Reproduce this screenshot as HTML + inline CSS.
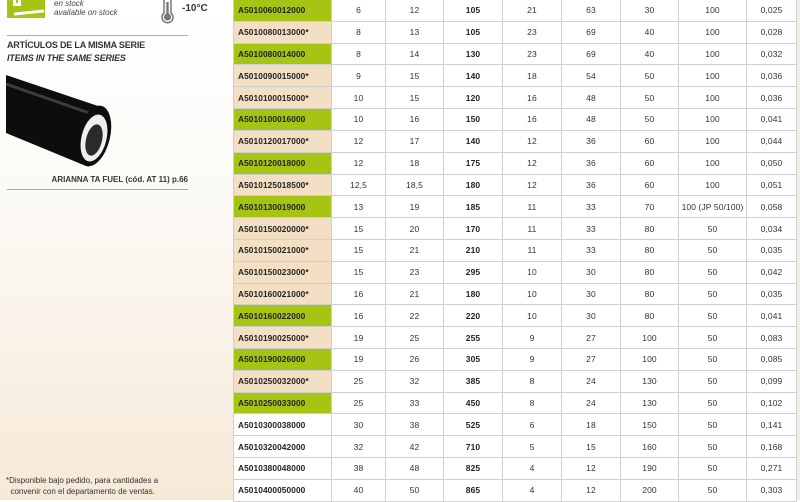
<!DOCTYPE html>
<html><head><meta charset="utf-8"><style>
*{margin:0;padding:0;box-sizing:border-box}
body{width:800px;height:500px;overflow:hidden;font-family:"Liberation Sans",sans-serif;background:#fff;position:relative}
#left{position:absolute;left:0;top:0;width:234px;height:500px;background:linear-gradient(#fff 0%,#fcfaf6 40%,#f6e9d8 100%)}
#right{position:absolute;left:796px;top:0;width:4px;height:500px;background:#f6ecdf}
table{position:absolute;left:233px;top:-1px;border-collapse:collapse;font-size:8.5px;color:#333}
td{height:21.82px;border:1px solid #cfcfcf;text-align:center;padding:0;background:#fff;letter-spacing:0.1px}
td.c{text-align:left;padding-left:4px;font-weight:bold;color:#222;font-size:8.3px}
td.g{background:#a6c414}
td.b{background:#f3dfc4}
td.w{font-weight:bold;color:#222}
</style></head><body>
<div id="left">
<div style="position:absolute;left:7px;top:0;width:38px;height:18px;background:#a6c414"></div>
<div style="position:absolute;left:13px;top:0;width:8px;height:6px;border:3px solid #fff;border-top:none"></div>
<div style="position:absolute;left:14px;top:11px;width:30px;height:3px;background:#fff;transform:rotate(-6deg)"></div>
<div style="position:absolute;left:54px;top:-1px;font-size:8px;font-style:italic;color:#444;line-height:9px">en stock<br>available on stock</div>
<svg style="position:absolute;left:158px;top:0" width="20" height="24" viewBox="0 0 20 24"><path d="M6 0 V13 A5.5 5.5 0 1 0 13 13 V0" fill="#fff" stroke="#777" stroke-width="1.5"/><circle cx="9.5" cy="17" r="3.6" fill="#777"/><rect x="8.3" y="2" width="2.4" height="14" fill="#777"/></svg>
<div style="position:absolute;left:182px;top:3px;font-size:10px;font-weight:bold;color:#333">-10°C</div>
<div style="position:absolute;left:7px;top:35px;width:181px;height:1px;background:#aaa"></div>
<div style="position:absolute;left:7px;top:39px;font-size:9px;font-weight:bold;color:#333;line-height:12.5px;letter-spacing:-0.2px">ARTÍCULOS DE LA MISMA SERIE<br><i>ITEMS IN THE SAME SERIES</i></div>
<svg style="position:absolute;left:0;top:70px" width="120" height="100" viewBox="0 0 120 100">
<path d="M6 5 L98 36 L86 96 L6 63 Z" fill="#0d0d0d"/>
<path d="M6 14 L92 44" stroke="#777" stroke-width="3" opacity=".45"/>
<ellipse cx="94" cy="66" rx="16" ry="31" transform="rotate(14 94 66)" fill="#0d0d0d"/>
<ellipse cx="94" cy="68" rx="12.5" ry="24" transform="rotate(14 94 68)" fill="#eee"/>
<ellipse cx="94" cy="70" rx="8" ry="16" transform="rotate(14 94 70)" fill="#2a2a2a"/>
</svg>
<div style="position:absolute;right:46px;top:175px;font-size:8px;font-weight:bold;color:#333">ARIANNA TA FUEL (cód. AT 11) p.66</div>
<div style="position:absolute;left:7px;top:189px;width:181px;height:1px;background:#aaa"></div>
<div style="position:absolute;left:6px;top:475px;font-size:8px;color:#333;line-height:11px">*Disponible bajo pedido, para cantidades a<br>&nbsp; convenir con el departamento de ventas.</div>
</div>
<div id="right"></div>
<table>
<colgroup><col style="width:98px"><col style="width:54px"><col style="width:58px"><col style="width:59px"><col style="width:59px"><col style="width:59px"><col style="width:58px"><col style="width:68px"><col style="width:50px"></colgroup>
<tr><td class="c g">A5010060012000</td><td>6</td><td>12</td><td class="w">105</td><td>21</td><td>63</td><td>30</td><td>100</td><td>0,025</td></tr>
<tr><td class="c b">A5010080013000*</td><td>8</td><td>13</td><td class="w">105</td><td>23</td><td>69</td><td>40</td><td>100</td><td>0,028</td></tr>
<tr><td class="c g">A5010080014000</td><td>8</td><td>14</td><td class="w">130</td><td>23</td><td>69</td><td>40</td><td>100</td><td>0,032</td></tr>
<tr><td class="c b">A5010090015000*</td><td>9</td><td>15</td><td class="w">140</td><td>18</td><td>54</td><td>50</td><td>100</td><td>0,036</td></tr>
<tr><td class="c b">A5010100015000*</td><td>10</td><td>15</td><td class="w">120</td><td>16</td><td>48</td><td>50</td><td>100</td><td>0,036</td></tr>
<tr><td class="c g">A5010100016000</td><td>10</td><td>16</td><td class="w">150</td><td>16</td><td>48</td><td>50</td><td>100</td><td>0,041</td></tr>
<tr><td class="c b">A5010120017000*</td><td>12</td><td>17</td><td class="w">140</td><td>12</td><td>36</td><td>60</td><td>100</td><td>0,044</td></tr>
<tr><td class="c g">A5010120018000</td><td>12</td><td>18</td><td class="w">175</td><td>12</td><td>36</td><td>60</td><td>100</td><td>0,050</td></tr>
<tr><td class="c b">A5010125018500*</td><td>12,5</td><td>18,5</td><td class="w">180</td><td>12</td><td>36</td><td>60</td><td>100</td><td>0,051</td></tr>
<tr><td class="c g">A5010130019000</td><td>13</td><td>19</td><td class="w">185</td><td>11</td><td>33</td><td>70</td><td>100 (JP 50/100)</td><td>0,058</td></tr>
<tr><td class="c b">A5010150020000*</td><td>15</td><td>20</td><td class="w">170</td><td>11</td><td>33</td><td>80</td><td>50</td><td>0,034</td></tr>
<tr><td class="c b">A5010150021000*</td><td>15</td><td>21</td><td class="w">210</td><td>11</td><td>33</td><td>80</td><td>50</td><td>0,035</td></tr>
<tr><td class="c b">A5010150023000*</td><td>15</td><td>23</td><td class="w">295</td><td>10</td><td>30</td><td>80</td><td>50</td><td>0,042</td></tr>
<tr><td class="c b">A5010160021000*</td><td>16</td><td>21</td><td class="w">180</td><td>10</td><td>30</td><td>80</td><td>50</td><td>0,035</td></tr>
<tr><td class="c g">A5010160022000</td><td>16</td><td>22</td><td class="w">220</td><td>10</td><td>30</td><td>80</td><td>50</td><td>0,041</td></tr>
<tr><td class="c b">A5010190025000*</td><td>19</td><td>25</td><td class="w">255</td><td>9</td><td>27</td><td>100</td><td>50</td><td>0,083</td></tr>
<tr><td class="c g">A5010190026000</td><td>19</td><td>26</td><td class="w">305</td><td>9</td><td>27</td><td>100</td><td>50</td><td>0,085</td></tr>
<tr><td class="c b">A5010250032000*</td><td>25</td><td>32</td><td class="w">385</td><td>8</td><td>24</td><td>130</td><td>50</td><td>0,099</td></tr>
<tr><td class="c g">A5010250033000</td><td>25</td><td>33</td><td class="w">450</td><td>8</td><td>24</td><td>130</td><td>50</td><td>0,102</td></tr>
<tr><td class="c">A5010300038000</td><td>30</td><td>38</td><td class="w">525</td><td>6</td><td>18</td><td>150</td><td>50</td><td>0,141</td></tr>
<tr><td class="c">A5010320042000</td><td>32</td><td>42</td><td class="w">710</td><td>5</td><td>15</td><td>160</td><td>50</td><td>0,168</td></tr>
<tr><td class="c">A5010380048000</td><td>38</td><td>48</td><td class="w">825</td><td>4</td><td>12</td><td>190</td><td>50</td><td>0,271</td></tr>
<tr><td class="c">A5010400050000</td><td>40</td><td>50</td><td class="w">865</td><td>4</td><td>12</td><td>200</td><td>50</td><td>0,303</td></tr>
</table>
</body></html>
